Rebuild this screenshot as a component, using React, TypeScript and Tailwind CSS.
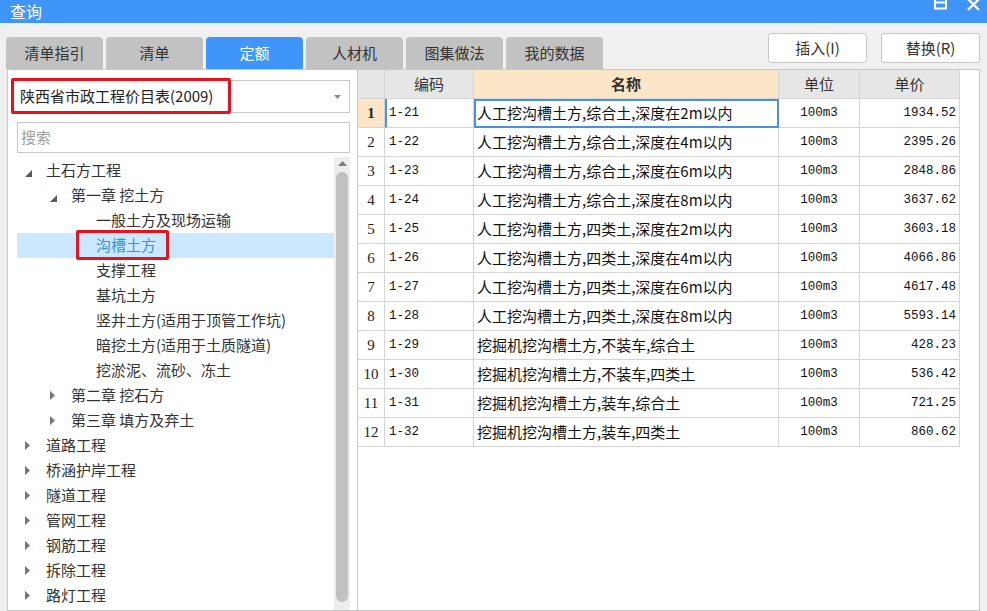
import React from 'react';

type TreeNode = { label: string; level: number; arrow?: 'open' | 'closed'; selected?: boolean };

const tree: TreeNode[] = [
  { label: '土石方工程', level: 0, arrow: 'open' },
  { label: '第一章 挖土方', level: 1, arrow: 'open' },
  { label: '一般土方及现场运输', level: 2 },
  { label: '沟槽土方', level: 2, selected: true },
  { label: '支撑工程', level: 2 },
  { label: '基坑土方', level: 2 },
  { label: '竖井土方(适用于顶管工作坑)', level: 2 },
  { label: '暗挖土方(适用于土质隧道)', level: 2 },
  { label: '挖淤泥、流砂、冻土', level: 2 },
  { label: '第二章 挖石方', level: 1, arrow: 'closed' },
  { label: '第三章 填方及弃土', level: 1, arrow: 'closed' },
  { label: '道路工程', level: 0, arrow: 'closed' },
  { label: '桥涵护岸工程', level: 0, arrow: 'closed' },
  { label: '隧道工程', level: 0, arrow: 'closed' },
  { label: '管网工程', level: 0, arrow: 'closed' },
  { label: '钢筋工程', level: 0, arrow: 'closed' },
  { label: '拆除工程', level: 0, arrow: 'closed' },
  { label: '路灯工程', level: 0, arrow: 'closed' },
];

const indent = ['pl-[8px]', 'pl-[33px]', 'pl-[58px]'];

const rows = [
  ['1-21', '人工挖沟槽土方,综合土,深度在2m以内', '100m3', '1934.52'],
  ['1-22', '人工挖沟槽土方,综合土,深度在4m以内', '100m3', '2395.26'],
  ['1-23', '人工挖沟槽土方,综合土,深度在6m以内', '100m3', '2848.86'],
  ['1-24', '人工挖沟槽土方,综合土,深度在8m以内', '100m3', '3637.62'],
  ['1-25', '人工挖沟槽土方,四类土,深度在2m以内', '100m3', '3603.18'],
  ['1-26', '人工挖沟槽土方,四类土,深度在4m以内', '100m3', '4066.86'],
  ['1-27', '人工挖沟槽土方,四类土,深度在6m以内', '100m3', '4617.48'],
  ['1-28', '人工挖沟槽土方,四类土,深度在8m以内', '100m3', '5593.14'],
  ['1-29', '挖掘机挖沟槽土方,不装车,综合土', '100m3', '428.23'],
  ['1-30', '挖掘机挖沟槽土方,不装车,四类土', '100m3', '536.42'],
  ['1-31', '挖掘机挖沟槽土方,装车,综合土', '100m3', '721.25'],
  ['1-32', '挖掘机挖沟槽土方,装车,四类土', '100m3', '860.62'],
];

const tabs = ['清单指引', '清单', '定额', '人材机', '图集做法', '我的数据'];

function Arrow({ kind }: { kind?: 'open' | 'closed' }) {
  if (kind === 'open')
    return (
      <svg width="7" height="7" className="mt-[6px]">
        <path d="M7 0 L7 7 L0 7 Z" fill="#595959" />
      </svg>
    );
  if (kind === 'closed')
    return (
      <svg width="5" height="9">
        <path d="M0 0 L5 4.5 L0 9 Z" fill="#777" />
      </svg>
    );
  return null;
}

export default function App() {
  return (
    <div className="w-[987px] h-[611px] overflow-hidden bg-[#f0f0f0] flex flex-col font-['Noto_Sans_CJK_SC',sans-serif] text-[#333]">
      {/* title bar */}
      <div className="h-[23px] shrink-0 bg-[#4096f8] flex items-start justify-between">
        <span className="ml-[10px] mt-[3px] text-[16px] leading-[17px] text-white">查询</span>
        <div className="flex items-start gap-[20px] mr-[7px]">
          <svg width="13" height="10" viewBox="0 0 13 10">
            <rect x="1" y="-4" width="11" height="12.5" fill="none" stroke="white" strokeWidth="2" />
            <line x1="1" y1="2.5" x2="12" y2="2.5" stroke="white" strokeWidth="2" />
          </svg>
          <svg width="13" height="11" viewBox="0 0 13 11">
            <path d="M1 -1 L12 10 M12 -1 L1 10" stroke="white" strokeWidth="2.4" />
          </svg>
        </div>
      </div>

      {/* tab row */}
      <div className="h-[46px] shrink-0 flex pl-[6px] pr-[7px]">
        <div className="flex items-end gap-[3px]">
          {tabs.map((t) => (
            <div
              key={t}
              className={
                t === '定额'
                  ? 'w-[97px] h-[32px] rounded-t-[4px] bg-[#4096f8] text-white text-[15px] flex items-center justify-center'
                  : 'w-[97px] h-[32px] rounded-t-[4px] bg-[#c2c2c2] text-[#333] text-[15px] flex items-center justify-center'
              }
            >
              {t}
            </div>
          ))}
        </div>
        <div className="ml-auto mt-[10px] flex gap-[14px]">
          <button className="w-[99px] h-[30px] bg-white border border-[#c9c9c9] rounded-[3px] text-[15px] text-[#333]">插入(I)</button>
          <button className="w-[99px] h-[30px] bg-white border border-[#c9c9c9] rounded-[3px] text-[15px] text-[#333]">替换(R)</button>
        </div>
      </div>

      {/* main panel */}
      <div className="flex-1 min-h-0 flex ml-[7px] mr-[7px] bg-white border border-[#c8c8c8]">
        {/* left */}
        <div className="w-[350px] shrink-0 flex flex-col pl-[9px] pr-[7px] border-r border-[#c8c8c8]">
          <div className="relative mt-[10px] -ml-[4px] h-[33px] border border-[#c8c8c8] flex items-center pl-[6px] pr-[8px]">
            <span className="text-[15px] text-[#222]">陕西省市政工程价目表(2009)</span>
            <svg width="7" height="4" className="ml-auto">
              <path d="M0 0 L7 0 L3.5 4 Z" fill="#888" />
            </svg>
            <div className="absolute -left-[3px] -top-[3px] w-[220px] h-[36px] border-[3px] border-[#e6121c] rounded-[2px]" />
          </div>
          <div className="mt-[9px] h-[31px] border border-[#c8c8c8] flex items-center pl-[3px] text-[15px] text-[#a0a0a0]">
            搜索
          </div>
          <div className="mt-[4px] flex-1 min-h-0 flex">
            <div className="flex-1 flex flex-col pt-[1px]">
              {tree.map((n) => (
                <div
                  key={n.label}
                  className={
                    (n.selected ? 'bg-[#cce8ff] text-[#3b8ee0] ' : 'text-[#333] ') +
                    'relative h-[25px] shrink-0 flex items-center text-[15px] ' +
                    indent[n.level]
                  }
                >
                  <div className="w-[21px] h-full flex items-center">
                    <Arrow kind={n.arrow} />
                  </div>
                  <span className="whitespace-nowrap">{n.label}</span>
                  {n.selected && (
                    <div className="absolute left-[59px] -top-[3px] w-[93px] h-[30px] border-[3px] border-[#e6121c] rounded-[2px]" />
                  )}
                </div>
              ))}
            </div>
            <div className="w-[16px] bg-[#ededed] flex flex-col items-center">
              <svg width="9" height="5" className="mt-[4px]">
                <path d="M0 5 L4.5 0 L9 5 Z" fill="#7a7a7a" />
              </svg>
              <div className="mt-[6px] w-[12px] h-[430px] rounded-[6px] bg-[#c1c1c1]" />
            </div>
          </div>
        </div>

        {/* right */}
        <div className="flex-1 min-w-0">
          <div className="w-[602px] grid grid-cols-[27px_89px_305px_81px_100px]">
            <div className="h-[29px] bg-[#e6e6e6] border-r border-b border-[#d4d4d4]" />
            <div className="h-[29px] bg-[#e6e6e6] border-r border-b border-[#d4d4d4] flex items-center justify-center text-[15px]">编码</div>
            <div className="h-[29px] bg-[#fde6c8] border-r border-b border-[#d4d4d4] flex items-center justify-center text-[15px] font-bold">名称</div>
            <div className="h-[29px] bg-[#e6e6e6] border-r border-b border-[#d4d4d4] flex items-center justify-center text-[15px]">单位</div>
            <div className="h-[29px] bg-[#e6e6e6] border-r border-b border-[#d4d4d4] flex items-center justify-center text-[15px]">单价</div>
            {rows.map((r, i) => (
              <React.Fragment key={r[0]}>
                <div
                  className={
                    (i === 0 ? 'bg-[#fde6c8] font-bold ' : 'bg-white ') +
                    "h-[29px] border-r border-b border-[#d4d4d4] flex items-center justify-center text-[15px] text-[#222] font-['Liberation_Serif',serif]"
                  }
                >
                  {i + 1}
                </div>
                <div
                  className={
                    (i === 0 ? 'border-l-2 border-l-[#4a90e2] pl-[2px] ' : 'pl-[4px] ') +
                    "h-[29px] border-r border-b border-[#d4d4d4] flex items-center text-[12.5px] text-[#111] font-['Liberation_Mono',monospace]"
                  }
                >
                  {r[0]}
                </div>
                <div
                  className={
                    (i === 0 ? 'border-2 border-[#4a90e2] pl-[1px] ' : 'border-r border-b border-[#d4d4d4] pl-[3px] ') +
                    'h-[29px] flex items-center text-[15px] text-[#111] whitespace-nowrap overflow-hidden'
                  }
                >
                  {r[1]}
                </div>
                <div className="h-[29px] border-r border-b border-[#d4d4d4] flex items-center justify-center text-[12.5px] text-[#111] font-['Liberation_Mono',monospace]">
                  {r[2]}
                </div>
                <div className="h-[29px] border-r border-b border-[#d4d4d4] flex items-center justify-end pr-[3px] text-[12.5px] text-[#111] font-['Liberation_Mono',monospace]">
                  {r[3]}
                </div>
              </React.Fragment>
            ))}
          </div>
        </div>
      </div>
    </div>
  );
}
